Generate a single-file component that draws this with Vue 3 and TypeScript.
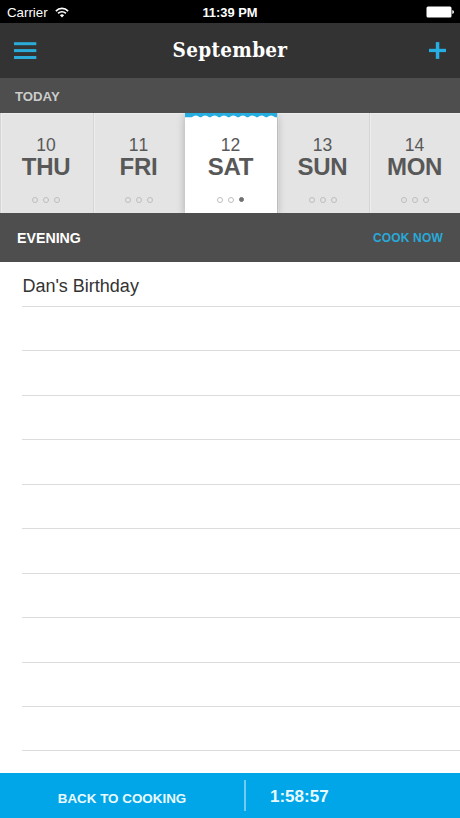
<script setup lang="ts">
interface Day {
  date: number
  name: string
  meals: boolean[]
  selected?: boolean
}

const days: Day[] = [
  { date: 10, name: 'THU', meals: [false, false, false] },
  { date: 11, name: 'FRI', meals: [false, false, false] },
  { date: 12, name: 'SAT', meals: [false, false, true], selected: true },
  { date: 13, name: 'SUN', meals: [false, false, false] },
  { date: 14, name: 'MON', meals: [false, false, false] },
]

const rows: string[] = ["Dan's Birthday", ...Array<string>(10).fill('')]
</script>

<template>
  <main class="screen">
    <div class="status">
      <div class="carrier">
        <span>Carrier</span>
        <svg width="14" height="11" viewBox="0 0 14 11" fill="none" stroke="#fff" stroke-width="1.7">
          <path d="M.9 4.1C4.3.5 9.7.5 13.1 4.1" />
          <path d="M3.1 6.4C5.3 4.2 8.7 4.2 10.9 6.4" />
          <path d="M7 10.4 4.9 8.2Q7 6.4 9.1 8.2Z" fill="#fff" stroke="none" />
        </svg>
      </div>
      <span class="clock">11:39 PM</span>
      <svg class="battery" width="28" height="12" viewBox="0 0 28 12" fill="#fff">
        <rect x="0.5" y="0.5" width="25" height="11" rx="1.5" />
        <path d="M26.3 4Q28 4.5 28 6T26.3 8Z" />
      </svg>
    </div>

    <header class="bar">
      <svg width="23" height="18" viewBox="0 0 23 18" fill="#2aabd8">
        <rect y="0.2" width="22.3" height="3" />
        <rect y="7.1" width="22.3" height="3" />
        <rect y="14" width="22.3" height="3" />
      </svg>
      <h1>September</h1>
      <svg width="18" height="18" viewBox="0 0 18 18" fill="#25afe3">
        <rect x="1" y="6.8" width="17" height="3.3" />
        <rect x="7.8" y="0.1" width="3.5" height="16.8" />
      </svg>
    </header>

    <div class="today">TODAY</div>

    <section class="days">
      <div v-for="day in days" :key="day.date" class="day" :class="{ selected: day.selected }">
        <svg v-if="day.selected" class="scallop" width="92" height="5" viewBox="0 0 92 5">
          <path
            fill="#27aee0"
            d="M0 0H92V4.2H90Q86 .8 82 4.2H80.6Q76.6 .8 72.6 4.2H71.2Q67.2 .8 63.2 4.2H61.8Q57.8 .8 53.8 4.2H52.4Q48.4 .8 44.4 4.2H43Q39 .8 35 4.2H33.6Q29.6 .8 25.6 4.2H24.2Q20.2 .8 16.2 4.2H14.8Q10.8 .8 6.8 4.2H0Z"
          />
        </svg>
        <span class="date">{{ day.date }}</span>
        <span class="name">{{ day.name }}</span>
        <span class="dots">
          <i v-for="(meal, n) in day.meals" :key="n" :class="{ on: meal }"></i>
        </span>
      </div>
    </section>

    <div class="section">
      <h2>EVENING</h2>
      <span class="cook">COOK NOW</span>
    </div>

    <ul class="list">
      <li v-for="(row, n) in rows" :key="n">{{ row }}</li>
    </ul>

    <footer class="footer">
      <span class="back">BACK TO COOKING</span>
      <span class="timer">1:58:57</span>
    </footer>
  </main>
</template>

<style>
body {
  margin: 0;
  background: #fff;
}
</style>

<style scoped>
.screen {
  width: 460px;
  height: 818px;
  display: flex;
  flex-direction: column;
  overflow: hidden;
  background: #fff;
  font-family: 'Liberation Sans', Arial, sans-serif;
}
.status {
  flex: none;
  height: 23px;
  box-sizing: border-box;
  padding: 1px 6px 0 7px;
  display: grid;
  grid-template-columns: 1fr auto 1fr;
  align-items: center;
  background: #000;
  color: #fff;
  font-size: 13.3px;
}
.carrier {
  display: flex;
  align-items: center;
  gap: 7px;
}
.clock {
  padding-right: 1px;
  font-size: 12.9px;
  font-weight: 700;
}
.battery {
  justify-self: end;
}
.bar {
  flex: none;
  height: 55px;
  box-sizing: border-box;
  padding: 0 14px;
  display: grid;
  grid-template-columns: 23px 1fr 18px;
  align-items: center;
  background: #333;
}
.bar h1 {
  margin: 0;
  padding-right: 5px;
  text-align: center;
  color: #fff;
  font: 700 20.5px/55px 'DejaVu Serif Condensed', 'DejaVu Serif', serif;
  font-stretch: condensed;
  letter-spacing: 0.3px;
}
.today {
  flex: none;
  height: 35px;
  padding-left: 15px;
  background: #4e4e4e;
  color: #ccc;
  font-size: 13.2px;
  font-weight: 700;
  line-height: 37px;
}
.days {
  flex: none;
  height: 100px;
  display: grid;
  grid-template-columns: 93px 92px 92px 92px 91px;
  background: #e4e4e4;
}
.day {
  position: relative;
  display: flex;
  flex-direction: column;
  align-items: center;
  border-left: 1px solid #d5d5d5;
  box-shadow: inset 1px 1px 0 #ededed;
  box-sizing: border-box;
  padding-right: 2px;
  color: #585858;
}
.day:last-child {
  padding-right: 1px;
}
.day.selected {
  z-index: 1;
  border-left-color: #fff;
  background: #fff;
  box-shadow: 0 3px 8px rgba(0, 0, 0, 0.25);
  clip-path: inset(0 -10px);
}
.scallop {
  position: absolute;
  top: 0;
  left: -1px;
}
.date {
  margin-top: 22px;
  font-size: 17.5px;
  line-height: 20px;
  font-kerning: none;
}
.name {
  font-size: 24px;
  line-height: 24px;
  font-weight: 700;
  letter-spacing: -0.3px;
}
.dots {
  display: flex;
  gap: 5px;
  margin-top: 18px;
}
.dots i {
  width: 6px;
  height: 6px;
  box-sizing: border-box;
  border: 1px solid #bdbdbd;
  border-radius: 50%;
}
.dots i.on {
  width: 5px;
  height: 5px;
  border-color: #707070;
  background: #707070;
}
.section {
  flex: none;
  height: 49px;
  box-sizing: border-box;
  padding: 1px 17px 0;
  display: flex;
  align-items: center;
  justify-content: space-between;
  background: #4e4e4e;
}
.section h2 {
  margin: 0;
  color: #fff;
  font-size: 14.2px;
}
.cook {
  color: #28a9d8;
  font-size: 12px;
  font-weight: 700;
  letter-spacing: 0.18px;
}
.list {
  flex: 1;
  margin: 0;
  padding: 0.6px 0 0 22.4px;
  list-style: none;
}
.list li {
  height: 44.44px;
  box-sizing: border-box;
  border-bottom: 1px solid #dcdcdc;
  color: #333;
  font-size: 18px;
  line-height: 46px;
}
.footer {
  flex: none;
  height: 45px;
  display: grid;
  grid-template-columns: 244px 1fr;
  align-items: center;
  background: #00a6e7;
  color: #e9faff;
  font-weight: 700;
}
.back {
  padding-top: 5px;
  text-align: center;
  font-size: 13.4px;
}
.timer {
  height: 31px;
  padding-left: 24px;
  border-left: 2px solid #70ccef;
  font-size: 17px;
  line-height: 33px;
}
</style>
